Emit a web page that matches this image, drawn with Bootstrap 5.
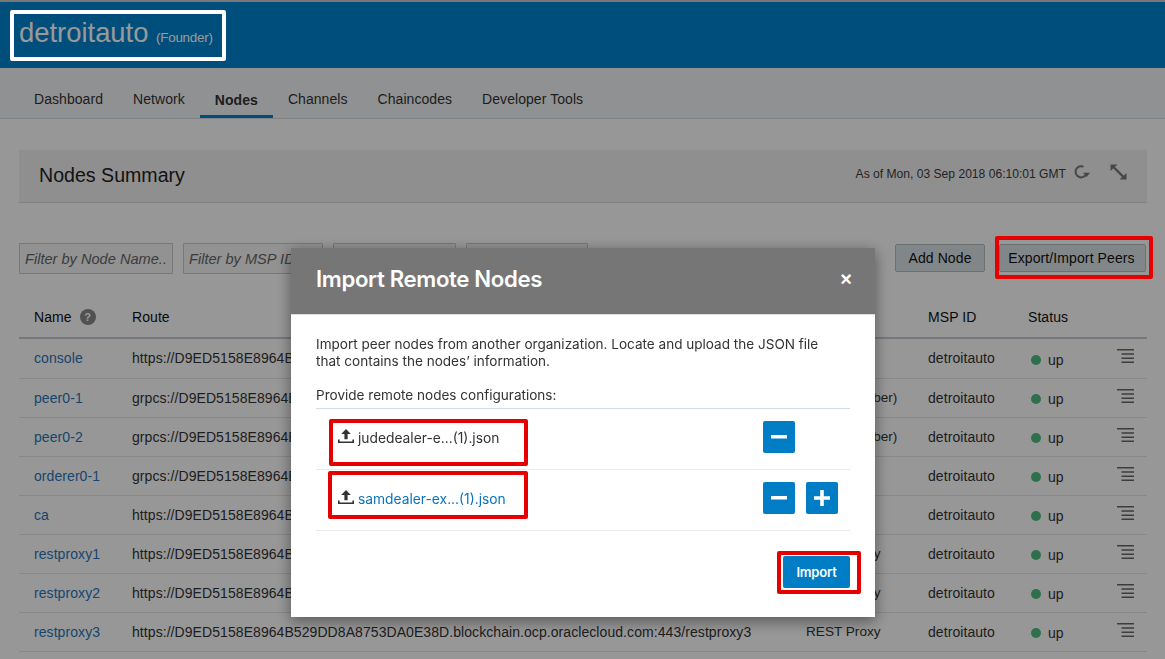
<!DOCTYPE html>
<html lang="en">
<head>
<meta charset="utf-8">
<title>Nodes</title>
<link href="https://cdn.jsdelivr.net/npm/bootstrap@5.3.0/dist/css/bootstrap.min.css" rel="stylesheet">
<style>
html,body{height:659px;overflow:hidden}
body{background:#fcfcfc;font-family:"Liberation Sans",Arial,sans-serif;font-size:14px;color:#2c2c2c}
.topbar{height:68px;background:#0083cf;border-top:2px solid #c8c8c8;padding:10px 0 0 19px;display:flex}
.brand-box{color:#fff;font-size:27.4px;line-height:36px;padding-top:3px}
.brand-box small{font-size:13.4px;letter-spacing:-.25px}
.tabbar{height:51px;background:#f0f2f5;border-bottom:1px solid #d4d8dc;padding-left:19px}
.tabbar .nav-link{color:#333;font-size:14px;letter-spacing:.06px;padding:0 15px;height:50px;line-height:63px;border-bottom:3px solid transparent}
.tabbar .nav-link.active{font-weight:700;border-bottom-color:#0083cf;line-height:65px}
.page-area{padding:31px 18px 0 19px}
.summary-bar{height:53px;background:#eee;border-bottom:1px solid #d6d6d6;padding:0 20px;display:flex;align-items:center;justify-content:space-between}
.summary-bar h1{font-size:19.6px;font-weight:400;margin:0;color:#222}
.asof{font-size:12.1px;color:#3c3c3c;display:flex;align-items:center;margin-top:-4px}
.asof svg{margin-top:-3px}
.filter-row{margin-top:39px;display:flex;align-items:center;height:32px}
.filter-row .form-control{height:31px;border-radius:1px;border-color:#c8c8c8;background:#f3f3f3;padding:2px 5px 0;font-size:14.6px;font-style:italic;margin-right:10px;flex:none}
.filter-row .form-control::placeholder{color:#666;opacity:1}
.fw1{width:154px}.fw2{width:140px}.fw3{width:123px}.fw4{width:122px}
.tool-btn{height:28px;font-size:14px;letter-spacing:.1px;line-height:26px;padding:0;border:1px solid #b4bcc2;border-radius:2px;background:#d8e0e5;color:#111}
.tool-add{width:90px;margin-left:auto;margin-right:14px}
.tool-exp{width:147px;margin-right:1px;padding-right:2px}
.node-table{table-layout:fixed;width:1128px;margin:22px 0 0;font-size:14px;letter-spacing:.07px;--bs-table-bg:transparent}
.node-table th{font-weight:400;height:42px;padding:1px 0 0 15px;vertical-align:middle;border-bottom:2px solid #c3cad1;color:#111}
.node-table td{height:39px;padding:2px 0 0 15px;vertical-align:middle;border-bottom:1px solid #e0e3e6;color:#333;white-space:nowrap;overflow:visible}
.node-table tbody tr:first-child td{height:40px;padding-top:0}
.node-table td a{color:#2874b8;text-decoration:none}
.node-table .type-cell{font-size:13.6px;letter-spacing:0}
.help-dot{display:inline-block;width:16px;height:16px;border-radius:50%;background:#888;color:#fff;font-size:11px;font-weight:700;line-height:16px;text-align:center;margin-left:4px;vertical-align:1px;letter-spacing:0}
.up-dot{display:inline-block;width:10px;height:10px;border-radius:50%;background:#4bbb7e;margin:0 7px 0 3px}
.node-table tbody tr td.up-cell{padding-top:4px}
.row-menu{display:block;margin:-5px 0 0 0}
.modal-backdrop.show{opacity:.4}
.import-dialog{width:584px;max-width:584px;margin:248px 0 0 291px}
.import-dialog .modal-content{border:0;border-radius:0;height:369px;box-shadow:0 4px 14px rgba(0,0,0,.45);font-family:Inter,"Liberation Sans",sans-serif}
.import-dialog .modal-header{background:#767676;height:67px;border:0;border-radius:0;padding:0 23px 4px 25px;border-bottom:1px solid #d9dee2}
.import-dialog .modal-title{color:#fff;font-size:22.2px;font-weight:600;letter-spacing:-.35px;font-family:Inter,sans-serif}
.close-x{background:none;border:0;color:#fff;font-size:20px;font-weight:700;line-height:1;padding:0;font-family:"Liberation Sans",sans-serif}
.import-dialog .modal-body{padding:21px 25px 0;font-size:13.55px;line-height:17px;color:#333;display:flex;flex-direction:column}
.import-dialog p{margin:0}
.import-dialog .intro-copy{max-width:520px}
.cfg-label{margin-top:17px!important;padding-bottom:4px;border-bottom:1px solid #d3dde4}
.cfg-row{height:61px;border-bottom:1px solid #e6eaed;display:flex;padding:12px 0 0 22px;align-items:flex-start}
.cfg-row:last-of-type{border-bottom-color:#d3dde4}
.file-name{display:flex;align-items:center;gap:4px;width:425px;height:24px;margin-top:5px;font-size:13.8px;color:#333;text-decoration:none;flex:none}
.file-name svg{margin-bottom:4px;flex:none}
.file-name.is-link{color:#0a72bd}
.sq-btn{width:32px;height:32px;background:#007dc5;border:0;border-radius:2px;padding:0;display:flex;align-items:center;justify-content:center;margin-right:11px;flex:none}
.import-btn{width:67px;height:32px;background:#007dc5;color:#fff;border:0;border-radius:2px;font-size:13px;font-weight:600;padding:0;letter-spacing:-.2px}
.foot-row{display:flex;justify-content:flex-end;margin-top:25px}
.mark-box{position:fixed;z-index:1060;pointer-events:none;border:4px solid #e60000;border-radius:2px}
.mark-white{border-color:#fff}
.mk-a{left:10px;top:10px;width:216px;height:51px}
.mk-b{left:995px;top:236px;width:158px;height:43px}
.mk-c{left:329px;top:419px;width:199px;height:47px}
.mk-d{left:328px;top:471px;width:200px;height:48px}
.mk-e{left:777px;top:551px;width:84px;height:43px}
</style>
</head>
<body>
<svg width="0" height="0" class="d-block position-absolute">
  <symbol id="ic-up" viewBox="0 0 16 15"><path d="M8 0 3.200 5h3.200v5.200h3.200V5h3.200z" fill="#333"/><path d="M0 10.500v3.500h16v-3.500h-1.600v2H1.600v-2z" fill="#333"/></symbol>
  <symbol id="ic-menu" viewBox="0 0 17 14"><path d="M0 .8h17M4.500 5h12.500M4.500 9.200h12.500M4.500 13.200h12.500" stroke="#666" stroke-width="1.500" fill="none"/></symbol>
</svg>

<header class="topbar">
  <div class="brand-box">detroitauto <small>(Founder)</small></div>
</header>

<nav class="tabbar">
  <ul class="nav">
    <li class="nav-item"><a class="nav-link" href="#">Dashboard</a></li>
    <li class="nav-item"><a class="nav-link" href="#">Network</a></li>
    <li class="nav-item"><a class="nav-link active" href="#">Nodes</a></li>
    <li class="nav-item"><a class="nav-link" href="#">Channels</a></li>
    <li class="nav-item"><a class="nav-link" href="#">Chaincodes</a></li>
    <li class="nav-item"><a class="nav-link" href="#">Developer Tools</a></li>
  </ul>
</nav>

<main class="page-area">
  <section class="summary-bar">
    <h1>Nodes Summary</h1>
    <div class="asof">As of Mon, 03 Sep 2018 06:10:01 GMT
      <svg class="ms-2" width="16" height="14" viewBox="0 0 16 14"><path d="M12.600 8.300A5.600 5.600 0 1 1 9.600 1.700" fill="none" stroke="#777" stroke-width="2"/><path d="M9 7.800h7l-3.400 4.200z" fill="#777"/></svg>
      <svg style="margin-left:20px" width="17" height="16" viewBox="0 0 17 16"><path d="M4 3.500 13 12.500" stroke="#777" stroke-width="2.400"/><path d="M0.500 0.500h7l-7 6.500zM16.500 15.500h-7l7-6.500z" fill="#777"/></svg>
    </div>
  </section>

  <div class="filter-row">
    <input class="form-control fw1" placeholder="Filter by Node Name..">
    <input class="form-control fw2" placeholder="Filter by MSP ID">
    <input class="form-control fw3" placeholder="Filter by Type">
    <input class="form-control fw4" placeholder="Filter by Status">
    <button class="btn tool-btn tool-add">Add Node</button>
    <button class="btn tool-btn tool-exp">Export/Import Peers</button>
  </div>

  <table class="table node-table">
    <colgroup><col style="width:98px"><col style="width:674px"><col style="width:122px"><col style="width:100px"><col style="width:89px"><col></colgroup>
    <thead><tr><th>Name <span class="help-dot">?</span></th><th>Route</th><th>Type</th><th>MSP ID</th><th>Status</th><th></th></tr></thead>
    <tbody id="rows">
      <tr><td><a href="#">console</a></td><td>https://D9ED5158E8964B529DD8A8753DA0E38D.blockchain.ocp.oraclecloud.com:443/console</td><td class="type-cell">Console</td><td>detroitauto</td><td class="up-cell"><span class="up-dot"></span>up</td><td><svg class="row-menu" width="17" height="14"><use href="#ic-menu"/></svg></td></tr>
      <tr><td><a href="#">peer0-1</a></td><td>grpcs://D9ED5158E8964B529DD8A8753DA0E38D.blockchain.ocp.oraclecloud.com:10003</td><td class="type-cell">Peer (Member)</td><td>detroitauto</td><td class="up-cell"><span class="up-dot"></span>up</td><td><svg class="row-menu" width="17" height="14"><use href="#ic-menu"/></svg></td></tr>
      <tr><td><a href="#">peer0-2</a></td><td>grpcs://D9ED5158E8964B529DD8A8753DA0E38D.blockchain.ocp.oraclecloud.com:10004</td><td class="type-cell">Peer (Member)</td><td>detroitauto</td><td class="up-cell"><span class="up-dot"></span>up</td><td><svg class="row-menu" width="17" height="14"><use href="#ic-menu"/></svg></td></tr>
      <tr><td><a href="#">orderer0-1</a></td><td>grpcs://D9ED5158E8964B529DD8A8753DA0E38D.blockchain.ocp.oraclecloud.com:10001</td><td class="type-cell">Orderer</td><td>detroitauto</td><td class="up-cell"><span class="up-dot"></span>up</td><td><svg class="row-menu" width="17" height="14"><use href="#ic-menu"/></svg></td></tr>
      <tr><td><a href="#">ca</a></td><td>https://D9ED5158E8964B529DD8A8753DA0E38D.blockchain.ocp.oraclecloud.com:443/ca</td><td class="type-cell">CA</td><td>detroitauto</td><td class="up-cell"><span class="up-dot"></span>up</td><td><svg class="row-menu" width="17" height="14"><use href="#ic-menu"/></svg></td></tr>
      <tr><td><a href="#">restproxy1</a></td><td>https://D9ED5158E8964B529DD8A8753DA0E38D.blockchain.ocp.oraclecloud.com:443/restproxy1</td><td class="type-cell">REST Proxy</td><td>detroitauto</td><td class="up-cell"><span class="up-dot"></span>up</td><td><svg class="row-menu" width="17" height="14"><use href="#ic-menu"/></svg></td></tr>
      <tr><td><a href="#">restproxy2</a></td><td>https://D9ED5158E8964B529DD8A8753DA0E38D.blockchain.ocp.oraclecloud.com:443/restproxy2</td><td class="type-cell">REST Proxy</td><td>detroitauto</td><td class="up-cell"><span class="up-dot"></span>up</td><td><svg class="row-menu" width="17" height="14"><use href="#ic-menu"/></svg></td></tr>
      <tr><td><a href="#">restproxy3</a></td><td>https://D9ED5158E8964B529DD8A8753DA0E38D.blockchain.ocp.oraclecloud.com:443/restproxy3</td><td class="type-cell">REST Proxy</td><td>detroitauto</td><td class="up-cell"><span class="up-dot"></span>up</td><td><svg class="row-menu" width="17" height="14"><use href="#ic-menu"/></svg></td></tr>
    </tbody>
  </table>
</main>

<div class="modal-backdrop show"></div>
<div class="modal d-block" tabindex="-1">
  <div class="modal-dialog import-dialog">
    <div class="modal-content">
      <div class="modal-header">
        <h2 class="modal-title">Import Remote Nodes</h2>
        <button class="close-x ms-auto" aria-label="Close">×</button>
      </div>
      <div class="modal-body">
        <p class="intro-copy">Import peer nodes from another organization. Locate and upload the JSON file that contains the nodes’ information.</p>
        <p class="cfg-label">Provide remote nodes configurations:</p>
        <div class="cfg-row">
          <span class="file-name"><svg width="16" height="15"><use href="#ic-up"/></svg>judedealer-e...(1).json</span>
          <button class="sq-btn" aria-label="Remove"><svg width="18" height="4"><rect width="16" height="3.500" x="1" fill="#fff"/></svg></button>
        </div>
        <div class="cfg-row">
          <a class="file-name is-link" href="#"><svg width="16" height="15"><use href="#ic-up"/></svg>samdealer-ex...(1).json</a>
          <button class="sq-btn" aria-label="Remove"><svg width="18" height="4"><rect width="16" height="3.500" x="1" fill="#fff"/></svg></button>
          <button class="sq-btn" aria-label="Add"><svg width="16" height="16"><path d="M0 6.200h6.200V0h3.600v6.200H16v3.600H9.800V16H6.200V9.800H0z" fill="#fff"/></svg></button>
        </div>
        <div class="foot-row"><button class="import-btn">Import</button></div>
      </div>
    </div>
  </div>
</div>

<div class="mark-box mark-white mk-a"></div>
<div class="mark-box mk-b"></div>
<div class="mark-box mk-c"></div>
<div class="mark-box mk-d"></div>
<div class="mark-box mk-e"></div>

<script src="https://cdn.jsdelivr.net/npm/bootstrap@5.3.0/dist/js/bootstrap.bundle.min.js"></script>
</body>
</html>
